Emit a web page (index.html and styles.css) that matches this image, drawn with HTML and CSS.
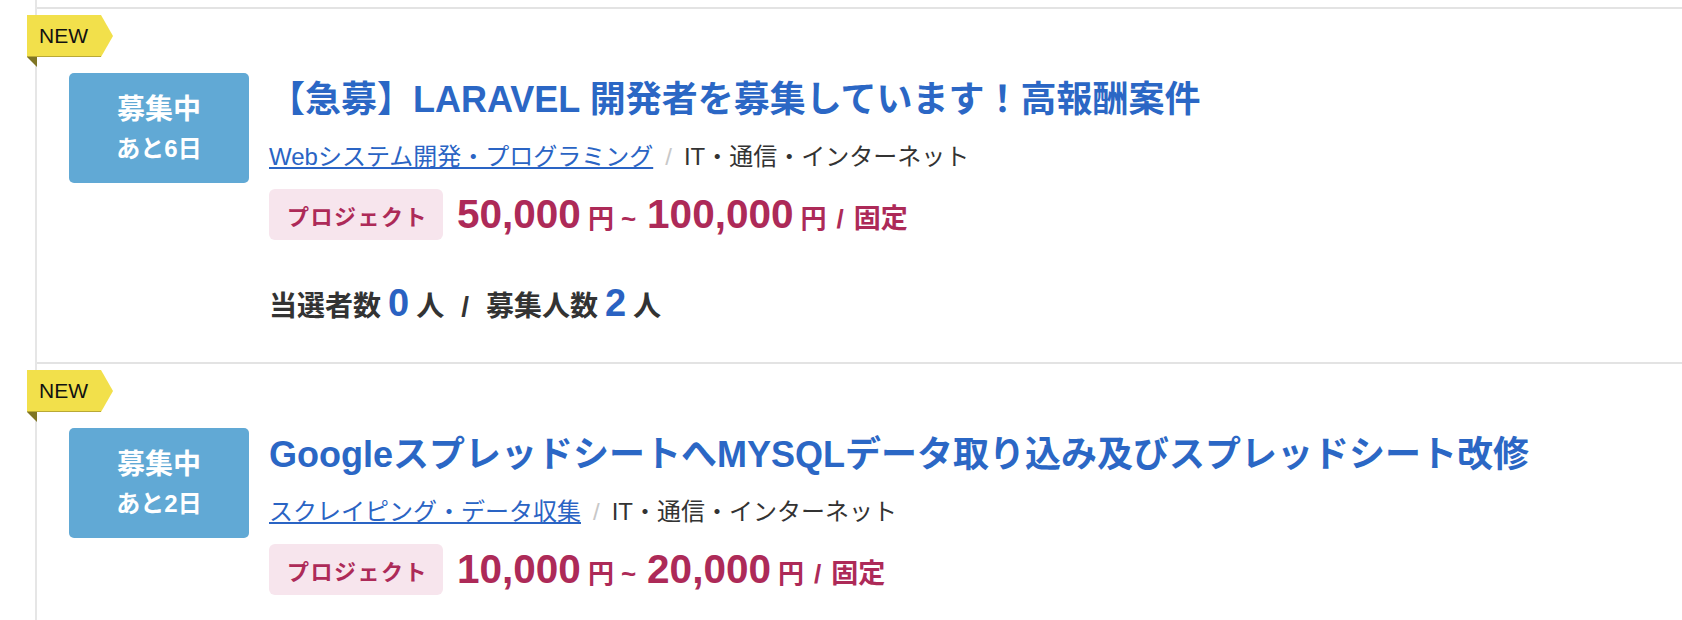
FILE: index.html
```html
<!DOCTYPE html>
<html lang="ja">
<head>
<meta charset="utf-8">
<title>案件一覧</title>
<link rel="stylesheet" href="styles.css">
</head>
<body>
<div class="list">
  <article class="job">
    <span class="badge-new">NEW</span>
    <div class="status">
      <span class="status-main">募集中</span>
      <span class="status-sub">あと6日</span>
    </div>
    <div class="job-body">
      <h2 class="job-title"><a href="#">【急募】LARAVEL 開発者を募集しています！高報酬案件</a></h2>
      <p class="job-cats"><a class="cat-link" href="#">Webシステム開発・プログラミング</a><span class="sep">/</span><span class="industry">IT・通信・インターネット</span></p>
      <div class="job-price">
        <span class="tag">プロジェクト</span>
        <span class="price">
          <span class="price-num">50,000</span><span class="price-unit">円</span><span class="price-tilde">~</span><span class="price-num">100,000</span><span class="price-unit">円</span><span class="price-sep">/</span><span class="price-type">固定</span>
        </span>
      </div>
      <p class="job-counts">
        <span class="count-label">当選者数</span><span class="count-num">0</span><span class="count-label">人</span><span class="count-sep">/</span><span class="count-label">募集人数</span><span class="count-num">2</span><span class="count-label">人</span>
      </p>
    </div>
  </article>
  <article class="job">
    <span class="badge-new">NEW</span>
    <div class="status">
      <span class="status-main">募集中</span>
      <span class="status-sub">あと2日</span>
    </div>
    <div class="job-body">
      <h2 class="job-title"><a href="#">GoogleスプレッドシートへMYSQLデータ取り込み及びスプレッドシート改修</a></h2>
      <p class="job-cats"><a class="cat-link" href="#">スクレイピング・データ収集</a><span class="sep">/</span><span class="industry">IT・通信・インターネット</span></p>
      <div class="job-price">
        <span class="tag">プロジェクト</span>
        <span class="price">
          <span class="price-num">10,000</span><span class="price-unit">円</span><span class="price-tilde">~</span><span class="price-num">20,000</span><span class="price-unit">円</span><span class="price-sep">/</span><span class="price-type">固定</span>
        </span>
      </div>
    </div>
  </article>
</div>
</body>
</html>
```
FILE: styles.css
```css
html, body {
  margin: 0;
  padding: 0;
  background: #fff;
  overflow: hidden;
}

body {
  font-family: "Liberation Sans", "Noto Sans CJK JP", sans-serif;
  color: #333;
}

.list {
  margin-left: 35px;
  padding-top: 7px;
  border-left: 2px solid #e6e6e6;
  min-height: 100vh;
}

.job {
  position: relative;
  display: flex;
  align-items: flex-start;
  padding: 64px 0 35px 32px;
  border-top: 2px solid #e3e3e3;
}

.badge-new {
  position: absolute;
  left: -10px;
  top: 6px;
  width: 74px;
  height: 42px;
  box-sizing: border-box;
  padding-left: 12px;
  background: #f2e04b;
  box-shadow: inset 0 -1px 0 #b9a936;
  color: #111;
  font-size: 21px;
  line-height: 42px;
}

.badge-new::after {
  content: "";
  position: absolute;
  left: 100%;
  top: 0;
  width: 0;
  height: 0;
  border-left: 12px solid #f2e04b;
  border-top: 21px solid transparent;
  border-bottom: 21px solid transparent;
}

.badge-new::before {
  content: "";
  position: absolute;
  left: 0;
  top: 100%;
  width: 0;
  height: 0;
  border-top: 10px solid #7f7524;
  border-left: 10px solid transparent;
}

.status {
  flex: none;
  width: 180px;
  height: 110px;
  box-sizing: border-box;
  padding-top: 3px;
  margin-right: 20px;
  border-radius: 5px;
  background: #61a9d5;
  color: #fff;
  font-weight: 700;
  display: flex;
  flex-direction: column;
  align-items: center;
  justify-content: center;
  gap: 3px;
}

.status-main {
  font-size: 28px;
  line-height: 36px;
}

.status-sub {
  font-size: 24px;
  line-height: 36px;
}

.job-body {
  min-width: 0;
}

.job-title {
  margin: 0;
  font-size: 36px;
  line-height: 54px;
  font-weight: 700;
  white-space: nowrap;
}

.job-title a {
  color: #2b67c5;
  text-decoration: none;
}

.job-cats {
  margin: 13px 0 0;
  font-size: 24px;
  line-height: 34px;
  color: #333;
  white-space: nowrap;
}

.cat-link {
  color: #2a64c4;
  text-decoration: underline;
}

.sep {
  color: #c8c8c8;
  margin: 0 12px;
}

.job-price {
  display: flex;
  align-items: center;
  margin-top: 15px;
  height: 51px;
}

.tag {
  display: inline-flex;
  align-items: center;
  height: 51px;
  box-sizing: border-box;
  padding: 0 15px 0 18px;
  border-radius: 6px;
  background: #f7e5ed;
  color: #ad2a58;
  font-size: 22px;
  font-weight: 700;
  letter-spacing: 1.5px;
}

.price {
  display: flex;
  align-items: baseline;
  margin-left: 14px;
  color: #ad2a58;
  font-weight: 700;
}

.price-num {
  font-size: 40.5px;
}

.price-unit {
  font-size: 26px;
  margin-left: 7px;
}

.price-tilde {
  font-size: 26px;
  margin: 0 11px 0 7px;
}

.price-sep {
  font-size: 26px;
  margin: 0 10px 0 10px;
}

.price-type {
  font-size: 27px;
}

.job-counts {
  display: flex;
  align-items: baseline;
  margin: 43px 0 0;
  line-height: 40px;
  font-size: 28px;
  font-weight: 700;
  color: #333;
}

.count-num {
  font-size: 38px;
  color: #2a62c2;
  margin: 0 7px 0 7px;
}

.count-sep {
  margin: 0 17px;
}
```
